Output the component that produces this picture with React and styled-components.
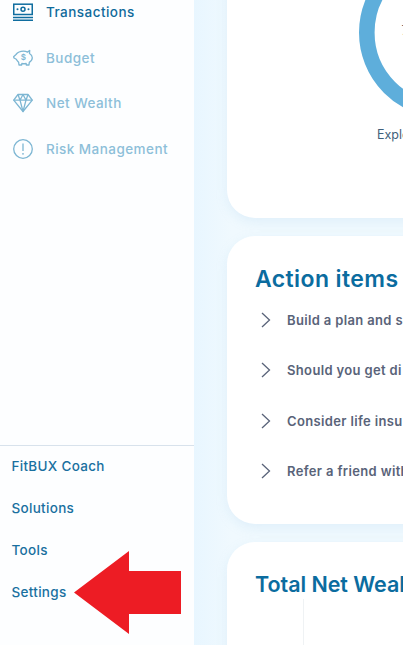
import React from "react";
import styled, { createGlobalStyle } from "styled-components";

const Global = createGlobalStyle`
  html, body {
    margin: 0;
    height: 645px;
    overflow: hidden;
    background: #fff;
    font-family: Inter, "Liberation Sans", sans-serif;
  }
`;

const Shell = styled.div`
  width: 403px;
  height: 645px;
  display: flex;
  overflow: hidden;
  position: relative;
`;

const Sidebar = styled.aside`
  width: 194px;
  flex: none;
  display: flex;
  flex-direction: column;
  justify-content: space-between;
  background: #fdfeff;
  height: 645px;
`;

const MainNav = styled.nav`
  display: flex;
  flex-direction: column;
  margin-top: -11px;
`;

const NavRow = styled.a`
  height: 45.7px;
  display: flex;
  align-items: center;
  gap: 13px;
  padding-left: 13px;
  font-size: 13.5px;
  font-weight: 500;
  letter-spacing: 0.45px;
  color: ${(p) => (p.$active ? "#0f6a9b" : "#8dbfd9")};

  svg {
    width: 20px;
    height: 20px;
    flex: none;
    color: ${(p) => (p.$active ? "#0f6d9f" : "#7db6d3")};
  }
`;

const BottomNav = styled.nav`
  border-top: 1px solid #d8e2ec;
  padding-bottom: 32px;
  display: flex;
  flex-direction: column;
`;

const BottomLink = styled.a`
  height: 42px;
  display: flex;
  align-items: center;
  padding-left: 11.5px;
  font-size: 13.5px;
  font-weight: 500;
  letter-spacing: 0.3px;
  color: #19709f;

  &:first-child {
    height: 40px;
    padding-bottom: 1px;
  }
`;

const Main = styled.main`
  flex: 1;
  min-width: 0;
  overflow: hidden;
  padding-left: 33px;
  display: flex;
  flex-direction: column;
  gap: 18px;
  background: linear-gradient(90deg, #e8f6ff 0%, #f0f9fe 18%, #f0f9fe 100%);
`;

const Card = styled.section`
  width: 434px;
  flex: none;
  background: #fff;
  border-radius: 28px;
  box-shadow: 0 4px 12px rgba(150, 200, 235, 0.18);
`;

const ScoreCard = styled(Card)`
  height: 278px;
  margin-top: -60px;
  display: flex;
  flex-direction: column;
  align-items: center;
  padding-top: 7px;
  box-sizing: border-box;
`;

const Ring = styled.div`
  width: 171px;
  height: 171px;
  position: relative;

  svg {
    display: block;
  }
`;

const RingMark = styled.span`
  position: absolute;
  left: 43px;
  top: 75px;
  font-size: 13px;
  line-height: 16px;
  color: #5a5566;
`;

const Explore = styled.p`
  margin: 9px 0 0;
  width: 134px;
  font-size: 12.5px;
  line-height: 16px;
  color: #3f5f7a;
  white-space: nowrap;
`;

const ActionCard = styled(Card)`
  height: 288px;
  padding: 28px 0 0 28px;
  box-sizing: border-box;
`;

const Title = styled.h2`
  margin: 0;
  font-size: 23px;
  line-height: 30px;
  font-weight: 600;
  letter-spacing: 0.4px;
  color: #0b6c9f;
  white-space: nowrap;
`;

const WealthTitle = styled(Title)`
  padding-top: 1px;
  font-size: 21.5px;
  letter-spacing: -0.05px;
`;

const ActionList = styled.ul`
  list-style: none;
  margin: 1px 0 0;
  padding: 0;
`;

const ActionRow = styled.li`
  height: 50.3px;
  display: flex;
  align-items: center;
  gap: 15px;
  padding-left: 5px;
  font-size: 13px;
  font-weight: 600;
  letter-spacing: 0.35px;
  color: #596379;
  white-space: nowrap;

  svg {
    flex: none;
    width: 12px;
    height: 16px;
  }
`;

const WealthCard = styled(Card)`
  height: 200px;
  padding: 26px 0 0 28px;
  box-sizing: border-box;
`;

const ChartArea = styled.div`
  height: 120px;
  margin: 0 0 0 48px;
  border-left: 1px solid #eff2f4;
`;

const Arrow = styled.svg`
  position: absolute;
  left: 74px;
  top: 551px;
  width: 107px;
  height: 83px;
`;

const TransactionsIcon = () => (
  <svg viewBox="0 0 20 20" fill="none" stroke="currentColor" strokeWidth="1.5">
    <rect x="0.75" y="2.2" width="18.5" height="10.3" />
    <circle cx="10" cy="7.3" r="2" />
    <circle cx="4.5" cy="7.3" r="1" fill="currentColor" stroke="none" />
    <circle cx="15.5" cy="7.3" r="1" fill="currentColor" stroke="none" />
    <path d="M0 15.4h20M0 18.2h20" />
  </svg>
);

const PiggyIcon = () => (
  <svg viewBox="0 0 20 20" fill="none" stroke="currentColor" strokeWidth="1.3" strokeLinejoin="round">
    <path d="M3 6.5C4.5 4.5 7.5 3.2 10.5 3.2c1.5 0 2.8.3 4 .9l2.2-1.6-.2 3c1.7 1 2.8 2.4 2.8 4.2 0 2.1-1.3 3.6-3 4.7l-.3 2.6h-2.6l-.3-1.5c-1.4.3-2.9.3-4.2 0l-.3 1.5H6l-.4-2.8C4.6 13.2 3.8 12.3 3.3 11.3L1 10 .6 8.7 3 6.5z" />
    <text x="10.5" y="11.8" fontSize="8" fontWeight="600" textAnchor="middle" fill="currentColor" stroke="none" fontFamily="Inter, sans-serif">$</text>
  </svg>
);

const DiamondIcon = () => (
  <svg viewBox="0 0 20 20" fill="none" stroke="currentColor" strokeWidth="1.3" strokeLinejoin="round">
    <path d="M5 1.5h10l4.3 5.7L10 18.5.7 7.2 5 1.5z" />
    <path d="M.7 7.2h18.6M5 1.5l2 5.7 3 11.3 3-11.3 2-5.7M7 7.2 10 1.5l3 5.7" />
  </svg>
);

const AlertIcon = () => (
  <svg viewBox="0 0 20 20" fill="none" stroke="currentColor" strokeWidth="1.3">
    <circle cx="10" cy="10" r="9.3" />
    <path d="M10 4.5v7.5" />
    <circle cx="10" cy="14.8" r="0.9" fill="currentColor" stroke="none" />
  </svg>
);

const Chevron = () => (
  <svg viewBox="0 0 12 16" fill="none" stroke="#596379" strokeWidth="1.3">
    <path d="M2 1l7.5 7L2 15" />
  </svg>
);

const actions = ["Build a plan and s", "Should you get di", "Consider life insu", "Refer a friend with"];

export default function App() {
  return (
    <>
      <Global />
      <Shell>
        <Sidebar>
          <MainNav>
            <NavRow $active><TransactionsIcon />Transactions</NavRow>
            <NavRow><PiggyIcon />Budget</NavRow>
            <NavRow><DiamondIcon />Net Wealth</NavRow>
            <NavRow><AlertIcon />Risk Management</NavRow>
          </MainNav>
          <BottomNav>
            <BottomLink>FitBUX Coach</BottomLink>
            <BottomLink>Solutions</BottomLink>
            <BottomLink>Tools</BottomLink>
            <BottomLink>Settings</BottomLink>
          </BottomNav>
        </Sidebar>
        <Main>
          <ScoreCard>
            <Ring>
              <svg width="171" height="171" viewBox="0 0 171 171">
                <circle cx="85.5" cy="85.5" r="77.7" fill="none" stroke="#5eaedb" strokeWidth="15.6" />
              </svg>
              <RingMark>7</RingMark>
            </Ring>
            <Explore>Explore your score</Explore>
          </ScoreCard>
          <ActionCard>
            <Title>Action items</Title>
            <ActionList>
              {actions.map((a) => (
                <ActionRow key={a}><Chevron />{a}</ActionRow>
              ))}
            </ActionList>
          </ActionCard>
          <WealthCard>
            <WealthTitle>Total Net Wealth</WealthTitle>
            <ChartArea />
          </WealthCard>
        </Main>
        <Arrow viewBox="0 0 107 83">
          <path d="M0 41.5 55 0v20h52v43H55v20z" fill="#ed1c24" />
        </Arrow>
      </Shell>
    </>
  );
}
